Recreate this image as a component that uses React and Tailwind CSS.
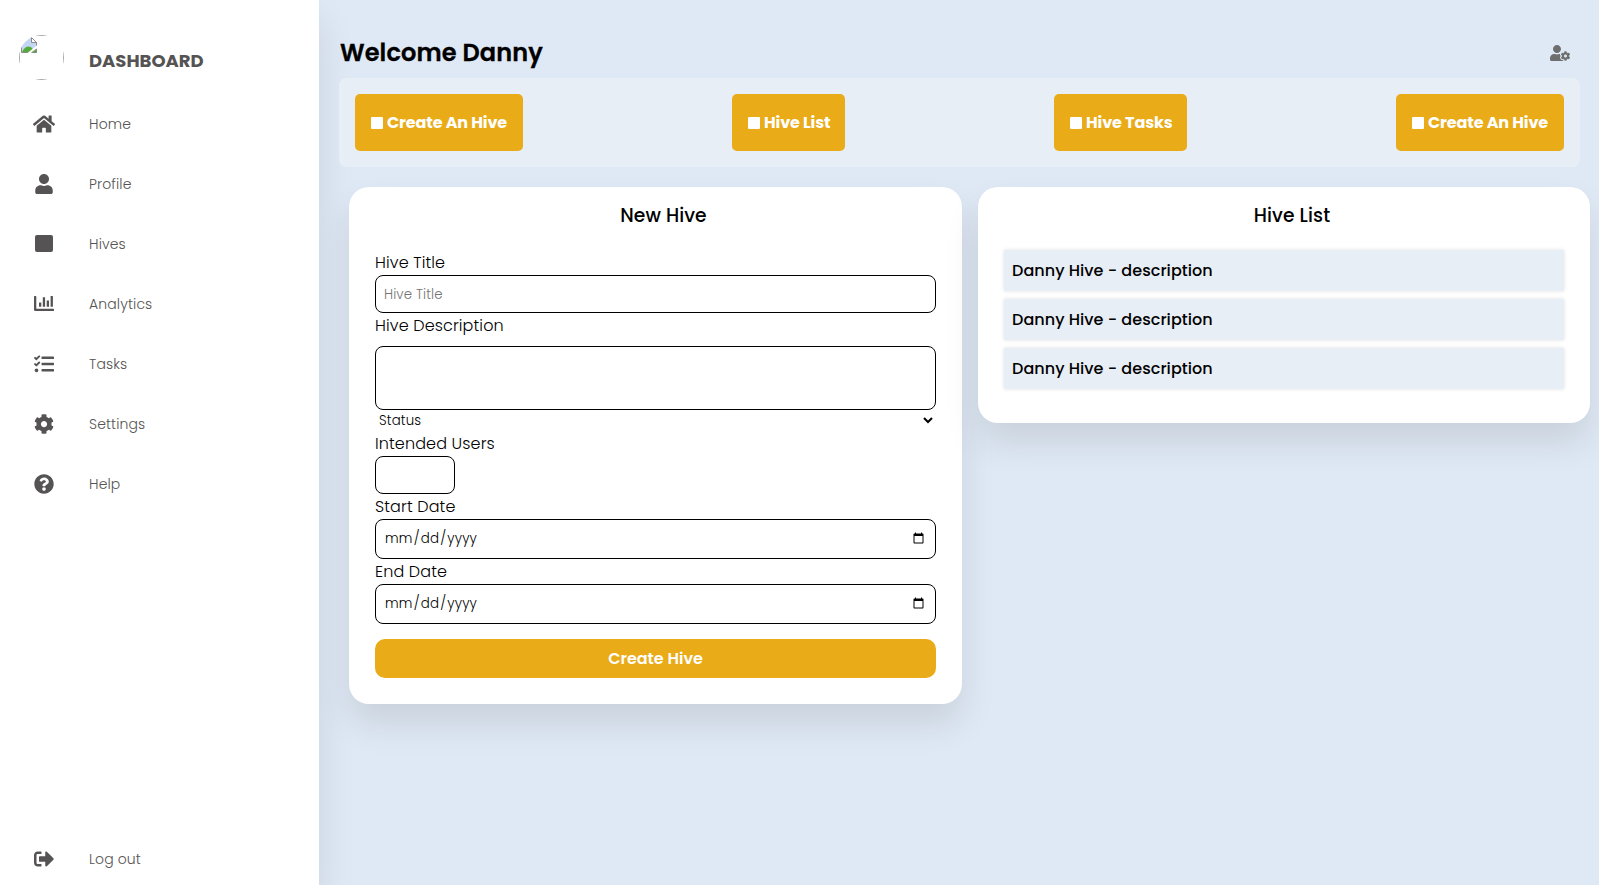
import { FaHome, FaUser, FaTasks, FaCog, FaQuestionCircle, FaUserCog, FaSignOutAlt } from "react-icons/fa";

function SquareIcon() {
  return <span className="block h-[17px] w-[18px] rounded-[2px] bg-current" />;
}

function ChartIcon() {
  return (
    <svg viewBox="0 0 20 15" className="h-[15px] w-5" fill="currentColor">
      <path d="M0 .6C0 .3.300 0 .6 0h1c.4 0 .7.300.7.6v12.100h17c.4 0 .7.300.7.600v1.100c0 .3-.3.600-.7.600H1.200C.5 15 0 14.500 0 13.800z" />
      <path d="M5 6.500h2.300v4.200H5zM8.800 1.200h2.300v9.500H8.800zM12.700 4.500H15v6.200h-2.300zM16.600 0h2.300v10.700h-2.300z" />
    </svg>
  );
}

function MissingImage() {
  return (
    <svg viewBox="0 0 16 16" className="h-4 w-4">
      <path d="M.5.5h10l5 5v10H.5z" fill="#c3d6f5" stroke="#8b8b8b" />
      <path d="M1 15c1.500-3.500 4-5.500 6.500-5.500 2 0 3.500 1.200 4.500 3L9 15z" fill="#55ab3a" />
      <path d="M10.500.5v5h5z" fill="#fff" stroke="#8b8b8b" />
      <path d="M6.500 16 16 8.200v3.300L10.500 16z" fill="#fff" />
      <path d="M10.500 15.500h5V12z" fill="#55ab3a" stroke="#8b8b8b" strokeWidth=".6" />
    </svg>
  );
}

const nav = [
  { label: "Home", icon: <FaHome size={22} /> },
  { label: "Profile", icon: <FaUser size={20} /> },
  { label: "Hives", icon: <SquareIcon /> },
  { label: "Analytics", icon: <ChartIcon /> },
  { label: "Tasks", icon: <FaTasks size={20} /> },
  { label: "Settings", icon: <FaCog size={20} /> },
  { label: "Help", icon: <FaQuestionCircle size={20} /> },
];

function NavItem({ label, icon }) {
  return (
    <a className="flex h-[60px] items-center">
      <span className="flex w-[89px] justify-center pb-px pr-[1px]">{icon}</span>
      <span className="text-[14px] font-light tracking-[0.13px]">{label}</span>
    </a>
  );
}

function Sidebar() {
  return (
    <nav className="flex h-full w-[319px] shrink-0 flex-col bg-white text-[#555353] shadow-[0_20px_35px_rgba(0,0,0,0.1)]">
      <div className="flex h-[94px] shrink-0 pt-[35px]">
        <div className="ml-[19px] h-[45px] w-[45px] overflow-hidden rounded-full">
          <div className="h-full w-full border border-[#a9a9a9] p-px">
            <MissingImage />
          </div>
        </div>
        <span className="ml-[25px] mt-[14px] text-[18px] font-bold leading-6">DASHBOARD</span>
      </div>
      {nav.map((n) => (
        <NavItem key={n.label} {...n} />
      ))}
      <div className="-mb-1 mt-auto">
        <NavItem label="Log out" icon={<FaSignOutAlt size={20} />} />
      </div>
    </nav>
  );
}

const actions = [
  { label: "Create An Hive", width: "w-[168px]" },
  { label: "Hive List", width: "w-[113px]" },
  { label: "Hive Tasks", width: "w-[133px]" },
  { label: "Create An Hive", width: "w-[168px]" },
];

const field = "block rounded-[8px] border border-black bg-white text-[13.333px] font-light outline-none";

function Label({ children }) {
  return <label className="block h-[25px] pt-px text-[16px] font-light leading-6 tracking-[0.12px]">{children}</label>;
}

export default function App() {
  return (
    <div className="flex h-[885px] w-[1599px] overflow-hidden bg-[#dfe9f5] font-[Poppins,Inter,sans-serif] text-black">
      <Sidebar />
      <main className="min-w-0 flex-1 pl-5">
        <header className="flex h-[78px] w-[1241px] items-center justify-between pl-px pr-[10px] pt-7">
          <h1 className="text-[24px] font-semibold leading-8 tracking-[0.12px] [-webkit-text-stroke:0.3px_black]">Welcome Danny</h1>
          <FaUserCog size={20} className="text-[#6e6e6e]" />
        </header>
        <section className="flex h-[89px] w-[1241px] items-center justify-between rounded-[8px] bg-[#e8eef6] px-4">
          {actions.map((a, i) => (
            <button key={i} className={`flex h-[57px] items-center gap-[4px] rounded-[5px] bg-[#e9ab17] pl-4 text-[16px] font-bold tracking-[-0.12px] text-white ${a.width}`}>
              <span className="h-3 w-3 shrink-0 rounded-[1px] bg-white" />
              <span className="whitespace-nowrap">{a.label}</span>
            </button>
          ))}
        </section>
        <div className="mt-5 flex items-start gap-4 pl-[10px]">
          <section className="h-[517px] w-[613px] rounded-[20px] bg-white px-[26px] shadow-[0_20px_35px_rgba(0,0,0,0.1)]">
            <h2 className="h-[63px] pl-4 pt-[17px] text-center text-[18.720px] font-medium leading-6 tracking-[0.08px]">New Hive</h2>
            <Label>Hive Title</Label>
            <input placeholder="Hive Title" className={`h-[38px] w-full px-2 pt-px tracking-[0.12px] placeholder:text-[#757575] ${field}`} />
            <Label>Hive Description</Label>
            <textarea className={`mt-2 h-16 w-full resize-none ${field}`} />
            <select className="block h-[21px] w-full pr-px text-[13.333px] font-light tracking-[0.15px]">
              <option>Status</option>
            </select>
            <Label>Intended Users</Label>
            <input className={`h-[38px] w-20 px-2 ${field}`} />
            <Label>Start Date</Label>
            <input type="date" className={`h-10 w-full px-2 tracking-[0.2px] ${field}`} />
            <Label>End Date</Label>
            <input type="date" className={`h-10 w-full px-2 tracking-[0.2px] ${field}`} />
            <button className="mt-[15px] block h-[39px] w-full rounded-[10px] bg-[#e9ab17] text-[16px] font-semibold text-white">Create Hive</button>
          </section>
          <section className="h-[236px] w-[612px] rounded-[20px] bg-white px-[26px] shadow-[0_20px_35px_rgba(0,0,0,0.1)]">
            <h2 className="h-[63px] pl-4 pt-[17px] text-center text-[18.720px] font-medium leading-6 tracking-[0.1px]">Hive List</h2>
            <ul className="flex flex-col gap-2">
              {[0, 1, 2].map((i) => (
                <li key={i} className="flex h-[41px] items-center bg-[#e8eef6] px-2 text-[16px] font-medium tracking-[0.05px] shadow-[0_0_4px_rgba(0,0,0,0.12)]">
                  Danny Hive - description
                </li>
              ))}
            </ul>
          </section>
        </div>
      </main>
    </div>
  );
}
